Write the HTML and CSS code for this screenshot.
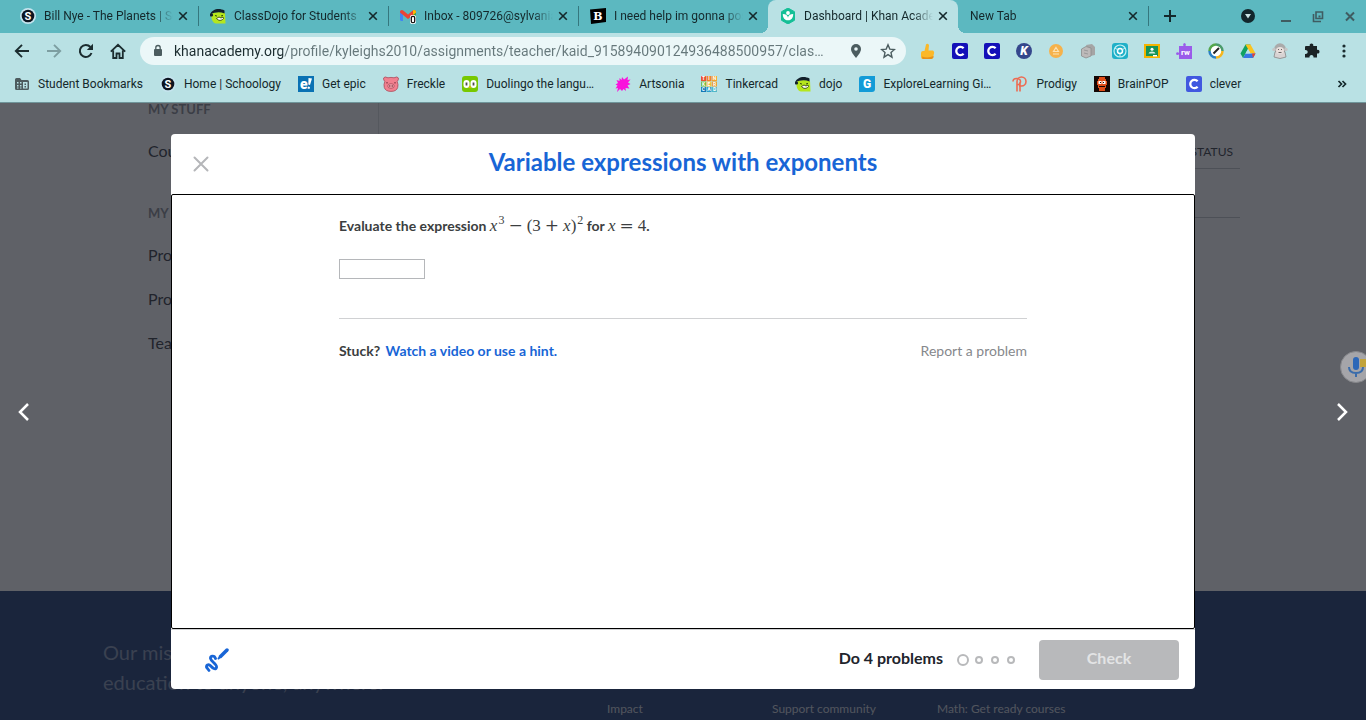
FILE: index.html
```
<!DOCTYPE html>
<html lang="en">
<head>
    <meta charset="UTF-8">
    <meta name="viewport" content="width=device-width, initial-scale=1.0">
    <title>Dashboard | Khan Academy</title>
    <link rel="stylesheet" href="styles.css">
</head>
<body>
    <!-- icons used more than once -->
    <svg class="defs" aria-hidden="true">
        <symbol id="schoology" viewBox="0 0 16 16">
            <circle cx="8" cy="8" r="8" fill="#c5e4ee"/>
            <circle cx="8" cy="8" r="6.3" fill="#0d1420"/>
            <text x="8" y="12" text-anchor="middle" font-size="11" font-weight="700" fill="#fff">S</text>
        </symbol>
        <symbol id="dojo" viewBox="0 0 16 16">
            <path d="M1.500 6C4 4 10 3 15 5l.5 10.500H6C3 15 1 12 1.500 6z" fill="#b5e61d"/>
            <path d="M0 6.500C2 1 9-.5 14.500 2.500v3C10 3.500 5 4 0 6.500z" fill="#12202a"/>
            <circle cx="1.500" cy="7" r="1.600" fill="#12202a"/>
            <path d="M6.500 10.500c2 2.500 5 2.500 7 0l-.5-1.500-2 1-2-1z" fill="#fff" stroke="#33480d" stroke-width=".9"/>
            <path d="M5 7.500l2 .6M11 8l2-.6" stroke="#33480d"/>
        </symbol>
        <symbol id="close" viewBox="0 0 16 16">
            <path d="M4.200 4.200l7.600 7.600m0-7.600l-7.600 7.600" fill="none" stroke="currentColor" stroke-width="1.600"/>
        </symbol>
        <symbol id="clever" viewBox="0 0 16 16">
            <rect width="16" height="16" rx="2" fill="currentColor"/>
            <path d="M11.600 10.800a4.200 4.200 0 1 1 0-5.600" fill="none" stroke="#fff" stroke-width="2.300"/>
        </symbol>
    </svg>

    <header class="browser">
        <div class="tab-strip">
            <div class="tab">
                <svg class="icon"><use href="#schoology"/></svg>
                <span class="tab-title">Bill Nye - The Planets | Schoology</span>
                <button class="tab-close" aria-label="Close tab"><svg class="icon"><use href="#close"/></svg></button>
            </div>
            <div class="tab">
                <svg class="icon"><use href="#dojo"/></svg>
                <span class="tab-title">ClassDojo for Students</span>
                <button class="tab-close" aria-label="Close tab"><svg class="icon"><use href="#close"/></svg></button>
            </div>
            <div class="tab">
                <svg class="icon" viewBox="0 0 16 16">
                    <path d="M0 3h3v10H1.500Q0 13 0 11.500z" fill="#4285f4"/>
                    <path d="M13 3h3v9h-3z" fill="#34a853"/>
                    <path d="M0 4.500C0 2 2 1.500 3.500 2.800L8 6.500l4.500-3.700C14 1.500 16 2 16 4.500L8 11z" fill="#ea4335"/>
                    <path d="M13 2.500c1.500-1 3 0 3 2L13 7z" fill="#fbbc04"/>
                    <rect x="10" y="7" width="6" height="9" rx="2" fill="#fff"/>
                    <rect x="11.300" y="8.300" width="3.400" height="6.400" rx="1.500" fill="none" stroke="#111" stroke-width="1.300"/>
                </svg>
                <span class="tab-title">Inbox - 809726@sylvaniaschools.org</span>
                <button class="tab-close" aria-label="Close tab"><svg class="icon"><use href="#close"/></svg></button>
            </div>
            <div class="tab">
                <svg class="icon" viewBox="0 0 16 16">
                    <path d="M0 1.500L16 0v14L1 16z" fill="#000"/>
                    <text class="slab" x="8" y="12" text-anchor="middle" font-size="11" font-weight="700" fill="#fff">B</text>
                </svg>
                <span class="tab-title">I need help im gonna post this</span>
                <button class="tab-close" aria-label="Close tab"><svg class="icon"><use href="#close"/></svg></button>
            </div>
            <div class="tab active">
                <svg class="icon" viewBox="0 0 16 16">
                    <path d="M8 0l6.500 3.700v8.600L8 16l-6.500-3.700V3.700z" fill="#14bf96" stroke="#14bf96" stroke-linejoin="round"/>
                    <circle cx="8" cy="5" r="1.900" fill="#fff"/>
                    <path d="M2.800 6c3 0 5 1.500 5.200 3.700C8.200 7.500 10.200 6 13.200 6c0 4-2 6.300-5.200 6.300S2.800 10 2.800 6z" fill="#fff"/>
                </svg>
                <span class="tab-title">Dashboard | Khan Academy</span>
                <button class="tab-close" aria-label="Close tab"><svg class="icon"><use href="#close"/></svg></button>
            </div>
            <div class="tab">
                <span class="tab-title">New Tab</span>
                <button class="tab-close" aria-label="Close tab"><svg class="icon"><use href="#close"/></svg></button>
            </div>
            <button class="new-tab" aria-label="New tab">
                <svg class="icon" viewBox="0 0 16 16"><path d="M8 2v12M2 8h12" stroke="#14282b" stroke-width="2"/></svg>
            </button>
            <div class="window-controls">
                <button class="search-tabs" aria-label="Search tabs">
                    <svg class="icon" viewBox="0 0 16 16"><circle cx="8" cy="8" r="7" fill="#12262c"/><path d="M5 6h6l-3 4.500z" fill="#c9e3e5"/></svg>
                </button>
                <button aria-label="Minimize">
                    <svg class="icon" viewBox="0 0 16 16"><path d="M3 13h10" stroke="#3f5c61" stroke-width="2"/></svg>
                </button>
                <button aria-label="Restore">
                    <svg class="icon" viewBox="0 0 16 16"><path d="M6 4h6.500v6.500H6zM3.500 6v7.500H11" fill="none" stroke="#3f5c61" stroke-width="1.600"/><path d="M8.500 7.500h2v2h-2z" fill="#3f5c61"/></svg>
                </button>
                <button aria-label="Close window">
                    <svg class="icon" viewBox="0 0 16 16"><path d="M4 4.500l8 8m0-8l-8 8" stroke="#3f5c61" stroke-width="2"/></svg>
                </button>
            </div>
        </div>

        <div class="toolbar">
            <button aria-label="Back">
                <svg class="icon" viewBox="0 0 16 16"><path d="M15 8H2M8 1.800L1.800 8 8 14.200" fill="none" stroke="#1b2c2f" stroke-width="1.900"/></svg>
            </button>
            <button aria-label="Forward" disabled>
                <svg class="icon" viewBox="0 0 16 16"><path d="M1 8h13M8 1.800L14.200 8 8 14.200" fill="none" stroke="#7d9ea1" stroke-width="1.900"/></svg>
            </button>
            <button aria-label="Reload">
                <svg class="icon" viewBox="0 0 16 16"><path d="M13.500 10A6 6 0 1 1 12.400 4" fill="none" stroke="#1b2c2f" stroke-width="2"/><path d="M15 .8V7H8.800z" fill="#1b2c2f"/></svg>
            </button>
            <button aria-label="Home">
                <svg class="icon" viewBox="0 0 16 16"><path d="M.8 8.700L8 1.800l7.200 6.900M3.200 7.500V15H6.500v-4.500h3V15h3.300V7.500" fill="none" stroke="#1b2c2f" stroke-width="1.800"/></svg>
            </button>
            <div class="omnibox">
                <svg class="icon" viewBox="0 0 16 16"><rect x="4" y="6" width="8" height="7" rx="1" fill="#4b5c5f"/><path d="M5.800 6.500V4.700a2.200 2.200 0 0 1 4.400 0v1.800" fill="none" stroke="#4b5c5f" stroke-width="1.300"/></svg>
                <input class="url" type="text" aria-label="Address" value="khanacademy.org/profile/kyleighs2010/assignments/teacher/kaid_915894090124936488500957/clas…">
                <button aria-label="Location">
                    <svg class="icon" viewBox="0 0 16 16"><path d="M8 1a5 5 0 0 0-5 5c0 3.500 5 9 5 9s5-5.500 5-9a5 5 0 0 0-5-5z" fill="#4b5c5f"/><circle cx="8" cy="6" r="1.800" fill="#e9f6f7"/></svg>
                </button>
                <button aria-label="Bookmark this page">
                    <svg class="icon" viewBox="0 0 16 16"><path d="M8 1.800l1.800 4.300 4.700.4-3.500 3.100 1 4.600-4-2.500-4 2.500 1-4.600L1.500 6.500l4.700-.4z" fill="none" stroke="#4b5c5f" stroke-width="1.400"/></svg>
                </button>
            </div>
            <div class="extensions">
                <button aria-label="Thumbs up">
                    <svg class="icon" viewBox="0 0 16 16"><path d="M4.500 8L6 1.500Q7.500-.3 9 2l-.5 5.500H13q1.500 1 1 3l-1 4Q12.500 16 11 16H3Q1 16 1 14v-4Q1 8 3 8z" fill="#fbb829"/><path d="M2 13.500Q8 15.500 13.500 13v1.500Q12 16 11 16H3q-1 0-1-2.500z" fill="#e6911b"/></svg>
                </button>
                <button class="navy" aria-label="Clever"><svg class="icon"><use href="#clever"/></svg></button>
                <button class="navy" aria-label="Clever portal"><svg class="icon"><use href="#clever"/></svg></button>
                <button aria-label="Kami">
                    <svg class="icon" viewBox="0 0 16 16"><circle cx="8" cy="8" r="8" fill="#35478c"/><text x="8" y="12" text-anchor="middle" font-size="12" font-weight="900" font-style="italic" fill="#fff">K</text></svg>
                </button>
                <button aria-label="Alerts">
                    <svg class="icon" viewBox="0 0 16 16"><circle cx="8" cy="8" r="7" fill="#f6b24b"/><path d="M8 4.500l2.500 4h-5zM5 11h6" fill="none" stroke="#fce3b5" stroke-width="1.200"/></svg>
                </button>
                <button aria-label="Documents">
                    <svg class="icon" viewBox="0 0 16 16"><path d="M6 2l6-1 3 3v8l-5 1z" fill="#a5a5a5"/><path d="M1.500 6L6 3.500 11 5v8l-5 2-4.500-2z" fill="#bdb9b9" stroke="#8c8c8c" stroke-width=".8"/><path d="M4 7l4 1M4 10l4 1" stroke="#999"/></svg>
                </button>
                <button aria-label="Screencastify">
                    <svg class="icon" viewBox="0 0 16 16"><rect width="16" height="16" rx="3" fill="#1fb0c8"/><circle cx="8" cy="8" r="6" fill="none" stroke="#c4f0f4" stroke-width="1.200"/><circle cx="8" cy="8" r="2.500" fill="none" stroke="#fff" stroke-width="1.500"/><path d="M3 5l3 2m7-2l-3 2M8 14v-3" stroke="#c4f0f4"/></svg>
                </button>
                <button aria-label="Google Classroom">
                    <svg class="icon" viewBox="0 0 16 16"><path d="M0 1h16v14H0z" fill="#f4b400"/><path d="M2 3h12v10H2z" fill="#159457"/><circle cx="8" cy="6.300" r="1.500" fill="#fff"/><path d="M4.500 10.500Q5 8.500 8 8.500t3.500 2z" fill="#d5eedf"/><path d="M9 12h4v1.500H9z" fill="#fff"/></svg>
                </button>
                <button aria-label="Read and Write">
                    <svg class="icon" viewBox="0 0 16 16"><path d="M3 3h4.500q-1-2.500 1-3 2 .5 1 3H16v13H3v-4.500q-2.500 1.200-3-.8.5-2 3-1z" fill="#9a5bea"/><text x="9.500" y="12" text-anchor="middle" font-size="8" font-weight="700" fill="#fff">rw</text></svg>
                </button>
                <button aria-label="Writing helper">
                    <svg class="icon" viewBox="0 0 16 16"><circle cx="8" cy="8" r="6" fill="#fff"/><path d="M8 1.500A6.500 6.500 0 0 1 14.500 8" fill="none" stroke="#4b9b6c" stroke-width="2.500"/><path d="M14.500 8A6.500 6.500 0 0 1 8 14.500" fill="none" stroke="#f6b61c" stroke-width="2.500"/><path d="M8 14.500A6.500 6.500 0 0 1 1.500 8" fill="none" stroke="#2a80c5" stroke-width="2.500"/><path d="M1.500 8A6.500 6.500 0 0 1 8 1.500" fill="none" stroke="#54a64c" stroke-width="2.500"/><path d="M5.500 10.500L11 5" stroke="#222" stroke-width="2"/></svg>
                </button>
                <button aria-label="Google Drive">
                    <svg class="icon" viewBox="0 0 16 16"><path d="M5.500 1.500h5L3 15 .5 10.500z" fill="#11a261"/><path d="M5.500 1.500h5l5 9h-5z" fill="#fcc31e"/><path d="M5.500 10.500h10L13 15H3z" fill="#3777e3"/><path d="M8 6l2.500 4.500h-5z" fill="#b8e1e6"/><path d="M12 10.500h3.500L13 15z" fill="#e94235"/></svg>
                </button>
                <button aria-label="Monkey">
                    <svg class="icon" viewBox="0 0 16 16"><circle cx="8" cy="6" r="5.800" fill="#aaa"/><circle cx="2" cy="6.500" r="1.700" fill="#c5c5c5"/><circle cx="14" cy="6.500" r="1.700" fill="#c5c5c5"/><path d="M3 9q5-4 10 0l1 5q-6 3-12 0z" fill="#d8d3d3" stroke="#888" stroke-width=".8"/><ellipse cx="8" cy="7.500" rx="4" ry="3.500" fill="#e8dfdc"/><path d="M6 6.500h1m2 0h1M6.500 9.500h3" stroke="#666"/></svg>
                </button>
                <button aria-label="Extensions">
                    <svg class="icon" viewBox="0 0 16 16"><path d="M2 3h3.800C5.200 1.500 6.200.5 7.500.5S9.800 1.500 9.200 3H13v4c1.500-.6 2.500.4 2.500 1.700S14.500 11 13 10.400v4.100H9.500c.2-1.700-.7-2.600-2-2.600s-2.200.9-2 2.600H1V11c1.700.2 2.700-.8 2.700-2S2.700 6.800 1 7V4q0-1 1-1z" fill="#1b2326"/></svg>
                </button>
                <button aria-label="Menu">
                    <svg class="icon" viewBox="0 0 16 16"><g fill="#1b2c2f"><circle cx="8" cy="3" r="1.600"/><circle cx="8" cy="8" r="1.600"/><circle cx="8" cy="13" r="1.600"/></g></svg>
                </button>
            </div>
        </div>

        <nav class="bookmarks" aria-label="Bookmarks">
            <a href="#">
                <svg class="icon" viewBox="0 0 16 16"><path d="M1 3.500Q1 2 2.500 2H6l1.500 2h6Q15 4 15 5.500v7q0 1.500-1.500 1.500h-11Q1 14 1 12.500z" fill="#4d5b5e"/><path d="M3 6h1.500v1.500H3zm3 0h1.500v1.500H6zM3 9h1.500v1.500H3zm3 0h1.500v1.500H6zm-3 2.500h1.500v1H3zm3 0h1.500v1H6zM9 6h4.500v6.500H9z" fill="#b9e1e4"/><path d="M10.500 7.500H12V9h-1.500zm0 2.500H12v1.500h-1.500z" fill="#4d5b5e"/></svg>
                Student Bookmarks
            </a>
            <a href="#"><svg class="icon"><use href="#schoology"/></svg>Home | Schoology</a>
            <a href="#">
                <svg class="icon" viewBox="0 0 16 16"><path d="M0 0h16v16H0z" fill="#0a71b3"/><text x="2" y="13" font-size="14" font-weight="900" fill="#fff">e</text><path d="M10.500 2l3.500.6L12 9l-1.700-.5zM10 10.500l2 .4-.5 2.100-2-.5z" fill="#fff"/></svg>
                Get epic
            </a>
            <a href="#">
                <svg class="icon" viewBox="0 0 16 16"><path d="M.6 2Q1.500 0 5 1.800q3-.8 6 0Q14.500 0 15.400 2q.3 2-1.200 3.500 1.300 3 .5 6Q13.500 15.400 8 15.400t-6.700-3.900q-.8-3 .5-6Q.3 4 .6 2z" fill="#f1808f" stroke="#a94a5a" stroke-width=".8"/><ellipse cx="8" cy="10" rx="3.300" ry="2.300" fill="#f7a4ae" stroke="#a94a5a" stroke-width=".8"/><path d="M6.800 9.200v1.600m2.400-1.600v1.600M4 6v1.500m8-1.500v1.500" stroke="#6d2836"/></svg>
                Freckle
            </a>
            <a class="long" href="#">
                <svg class="icon" viewBox="0 0 16 16"><rect width="16" height="16" rx="3" fill="#78c800"/><rect x="1.500" y="4" width="6" height="8" rx="3" fill="#fff"/><rect x="8.500" y="4" width="6" height="8" rx="3" fill="#fff"/><path d="M4.500 6.500v3m7-3v3" stroke="#4b4b4b" stroke-width="1.800"/><path d="M6.500 10.500h3L8 12.500z" fill="#ffb100"/></svg>
                Duolingo the langu…
            </a>
            <a href="#">
                <svg class="icon" viewBox="0 0 16 16"><path d="M6.500 4L7 1l2 2.500L13 .5l-.5 3.500 3-.5-2.500 3 2.500 1.500-3 1.500 2 3-4-.5.5 3-2.500-2-1.500 2-2-2L2 16l1-4-2.500.5L2.500 9.500.5 8.500 3 7 1.500 4l3 1L4.500 2z" fill="#fa10dc"/></svg>
                Artsonia
            </a>
            <a href="#">
                <svg class="icon" viewBox="0 0 16 16">
                    <path d="M0 0h5v5H0z" fill="#e95033"/><path d="M5.500 0h5v5h-5z" fill="#f2812c"/><path d="M11 0h5v5h-5z" fill="#f3a52d"/>
                    <path d="M0 5.500h5v5H0z" fill="#75b943"/><path d="M5.500 5.500h5v5h-5z" fill="#f3bb32"/><path d="M11 5.500h5v5h-5z" fill="#e99b30"/>
                    <path d="M0 11h5v5H0z" fill="#1377b6"/><path d="M5.500 11h5v5h-5z" fill="#2d9fcc"/><path d="M11 11h5v5h-5z" fill="#51b7c8"/>
                    <g fill="#fff" font-size="5" font-weight="700" text-anchor="middle"><text x="2.500" y="4.300">T</text><text x="8" y="4.300">I</text><text x="13.500" y="4.300">N</text><text x="2.500" y="9.800">K</text><text x="8" y="9.800">E</text><text x="13.500" y="9.800">R</text><text x="2.500" y="15.300">C</text><text x="8" y="15.300">A</text><text x="13.500" y="15.300">D</text></g>
                </svg>
                Tinkercad
            </a>
            <a href="#"><svg class="icon"><use href="#dojo"/></svg>dojo</a>
            <a class="long" href="#">
                <svg class="icon" viewBox="0 0 16 16"><path d="M3 0h13v13q0 3-3 3H0V3q0-3 3-3z" fill="#139bd7"/><text x="8" y="12" text-anchor="middle" font-size="12" font-weight="900" fill="#fff">G</text></svg>
                ExploreLearning Gi…
            </a>
            <a href="#">
                <svg class="icon" viewBox="0 0 16 16"><path d="M5 15.500V5.500A4.500 4.500 0 1 1 9.500 10H7M1 5.500q0-3 3.500-3 4 0 4 3T5 9M8 15.500V6" fill="none" stroke="#ed6b52" stroke-width="1.600"/></svg>
                Prodigy
            </a>
            <a href="#">
                <svg class="icon" viewBox="0 0 16 16"><path d="M0 0h16v16H0z" fill="#140704"/><path d="M5 1h6v2h1v2h1v4h-1v3h-1v3H5v-3H4V9H3V5h1V3h1z" fill="#df4d18"/><path d="M4.500 5h3v3h-3zm4 0h3v3h-3z" fill="#fff"/><path d="M6 6h1v1H6zm3 0h1v1H9zM5 10h6v1H5z" fill="#140704"/></svg>
                BrainPOP
            </a>
            <a class="violet" href="#"><svg class="icon"><use href="#clever"/></svg><span>clever</span></a>
            <button class="more" aria-label="More bookmarks">
                <svg class="icon" viewBox="0 0 16 16"><path d="M4.500 5l3 3-3 3m4-6l3 3-3 3" fill="none" stroke="#14282b" stroke-width="1.700"/></svg>
            </button>
        </nav>
    </header>

    <div class="page">
        <div class="dashboard">
            <nav class="sidebar" aria-label="Profile">
                <h2>MY STUFF</h2>
                <a href="#">Courses</a>
                <h2>MY ACCOUNT</h2>
                <a href="#">Progress</a>
                <a href="#">Profile</a>
                <a href="#">Teachers</a>
            </nav>
            <table class="assignments">
                <thead>
                    <tr><th>STATUS</th></tr>
                </thead>
                <tbody>
                    <tr><td></td></tr>
                </tbody>
            </table>
        </div>
        <footer class="site-footer">
            <p class="mission">Our mission is to provide a free, world-class education to anyone, anywhere.</p>
            <nav class="footer-links" aria-label="Footer">
                <a href="#">Impact</a>
                <a href="#">Support community</a>
                <a href="#">Math: Get ready courses</a>
            </nav>
        </footer>

        <div class="overlay">
            <button class="arrow" aria-label="Previous">
                <svg viewBox="0 0 16 24"><path d="M12 4L4 12l8 8" fill="none" stroke="#fff" stroke-width="2.500"/></svg>
            </button>
            <section class="modal" role="dialog" aria-labelledby="modal-title">
                <div class="modal-header">
                    <button class="modal-close" aria-label="Close">
                        <svg viewBox="0 0 16 16"><path d="M1.500 1.500l13 13m0-13l-13 13" fill="none" stroke="#b5b6b9" stroke-width="2" stroke-linecap="round"/></svg>
                    </button>
                    <h1 id="modal-title">Variable expressions with exponents</h1>
                </div>
                <div class="exercise">
                    <div class="exercise-inner">
                        <label class="question" for="answer">Evaluate the expression <span class="math"><i>x</i><sup>3</sup><span class="op">−</span>(3<span class="op">+</span><i>x</i>)<sup>2</sup></span> for <span class="math"><i>x</i><span class="op">=</span>4</span>.</label>
                        <input class="answer" id="answer" type="text">
                        <div class="help">
                            <p>Stuck? <a href="#">Watch a video or use a hint.</a></p>
                            <a class="report" href="#">Report a problem</a>
                        </div>
                    </div>
                </div>
                <div class="modal-footer">
                    <button class="scratchpad" aria-label="Scratchpad">
                        <svg viewBox="0 0 24 24" fill="none" stroke="#1865d6" stroke-linecap="round" stroke-linejoin="round"><path d="M22 2L15.500 8.500" stroke-width="3.500"/><path d="M13.500 10.500l1.500-1.500" stroke-width="2"/><path d="M10.500 10.500C9.500 7 5 7.500 5.500 10.500 6 13.500 12.500 16.500 11.500 19.500 10.500 22.500 7.500 20 5.500 17.800 3.500 15.500 .5 17.500 1.800 19.700L4 22.500" stroke-width="2.800"/></svg>
                    </button>
                    <span class="progress-text">Do 4 problems</span>
                    <div class="dots">
                        <span class="dot current"></span>
                        <span class="dot"></span>
                        <span class="dot"></span>
                        <span class="dot"></span>
                    </div>
                    <button class="check" disabled>Check</button>
                </div>
            </section>
            <button class="arrow" aria-label="Next">
                <svg viewBox="0 0 16 24"><path d="M4 4l8 8-8 8" fill="none" stroke="#fff" stroke-width="2.500"/></svg>
            </button>
        </div>

        <button class="mic" aria-label="Voice typing">
            <svg viewBox="0 0 32 32"><circle cx="16" cy="16" r="15.500" fill="#a5a5a9" stroke="#85868a"/><path d="M20 8h12v8H20z" fill="#c2a33b"/><rect x="13" y="6" width="6" height="13" rx="3" fill="#2c67b8"/><path d="M9 16q0 6 7 6t7-6M16 22v4" fill="none" stroke="#3a6cab" stroke-width="2"/></svg>
        </button>
    </div>
</body>
</html>
```

FILE: styles.css
```
* {
    box-sizing: border-box;
}
body {
    margin: 0;
    height: 100vh;
    display: flex;
    flex-direction: column;
    overflow: hidden;
    font-family: Lato, sans-serif;
    color: #21242c;
}
button {
    display: flex;
    align-items: center;
    justify-content: center;
    padding: 0;
    border: none;
    background: none;
    font-family: inherit;
    cursor: pointer;
}
a {
    color: inherit;
    text-decoration: none;
}
h1, h2, p {
    margin: 0;
}
.defs {
    display: none;
}
.icon {
    width: 16px;
    height: 16px;
    flex: none;
}
.slab {
    font-family: "DejaVu Serif", serif;
}

/* browser window */
.browser {
    font-family: Roboto, sans-serif;
    font-size: 12px;
    color: #14282b;
    background: #b9e1e4;
    border-bottom: 1px solid #70959a;
}
.tab-strip {
    display: flex;
    height: 33px;
    padding: 0 0 1px 8px;
    background: #5cb8c0;
}
.tab {
    position: relative;
    display: flex;
    align-items: center;
    gap: 8px;
    flex: 0 1 190px;
    min-width: 0;
    padding: 0 7px 0 12px;
}
.tab::after {
    content: "";
    position: absolute;
    right: -1px;
    top: 6px;
    width: 1px;
    height: 20px;
    background: #35777e;
}
.tab:has(+ .active)::after {
    display: none;
}
.tab.active {
    margin-bottom: -1px;
    padding-bottom: 1px;
    background: #b9e1e4;
    border-radius: 8px 8px 0 0;
}
/* the curved feet of the active tab */
.tab.active::before, .tab.active::after {
    content: "";
    position: absolute;
    top: auto;
    bottom: 0;
    width: 8px;
    height: 8px;
    background: radial-gradient(circle at 0 0, transparent 8px, #b9e1e4 8px);
}
.tab.active::before {
    left: -8px;
}
.tab.active::after {
    right: -8px;
    background: radial-gradient(circle at 100% 0, transparent 8px, #b9e1e4 8px);
}
.tab-title {
    flex: 1;
    overflow: hidden;
    white-space: nowrap;
    mask-image: linear-gradient(to right, #000 calc(100% - 20px), transparent);
}
.tab-close {
    margin-left: -6px;
    color: #14282b;
}
.new-tab {
    width: 44px;
}
.window-controls {
    display: flex;
    margin-left: auto;
}
.window-controls button {
    width: 32px;
}
.window-controls .search-tabs {
    margin-right: 6px;
}
.toolbar {
    display: flex;
    align-items: center;
    height: 36px;
    padding: 0 6px;
}
.toolbar button {
    width: 32px;
    height: 28px;
    flex: none;
}
.omnibox {
    display: flex;
    align-items: center;
    flex: 1;
    min-width: 0;
    height: 28px;
    margin: 0 6px;
    padding: 0 2px 0 10px;
    border-radius: 14px;
    background: #ebf7f8;
}
.url {
    flex: 1;
    min-width: 0;
    margin-left: 8px;
    padding: 0;
    border: none;
    font-family: inherit;
    font-size: 14px;
    line-height: 20px;
    color: transparent;
    background: linear-gradient(to right, #1b2c2f 109px, #66787b 109px);
    background-clip: text;
}
.extensions {
    display: flex;
}
.navy {
    color: #1410b8;
}
.bookmarks {
    display: flex;
    align-items: center;
    gap: 17px;
    height: 33px;
    padding: 0 16px 3px 14px;
    white-space: nowrap;
}
.bookmarks a {
    display: flex;
    align-items: center;
    gap: 8px;
}
.bookmarks .long {
    width: 136px;
}
.violet .icon {
    color: #4158e0;
}
.more {
    margin-left: auto;
}

/* profile page behind the modal */
.page {
    position: relative;
    flex: 1;
    min-height: 0;
    display: flex;
    flex-direction: column;
    overflow: hidden;
    background: #fff;
}
.dashboard {
    flex: 1;
    display: flex;
    margin-top: -1px;
    padding: 0 126px 0 148px;
}
.sidebar {
    width: 231px;
    border-right: 1px solid #dcdddf;
}
.sidebar h2 {
    margin-bottom: 13px;
    font-size: 13px;
    line-height: 14px;
    color: #7f8188;
}
.sidebar a + h2 {
    margin-top: 33px;
}
.sidebar a {
    display: block;
    font-size: 16px;
    line-height: 44px;
}
.assignments {
    flex: 1;
    align-self: flex-start;
    margin: 33px 0 0 32px;
    border-collapse: collapse;
}
.assignments th, .assignments td {
    padding: 0 7px;
    border-bottom: 1px solid #bfc0c4;
}
.assignments th {
    height: 33px;
    font-size: 12px;
    font-weight: 400;
    text-align: right;
}
.assignments td {
    height: 49px;
}
.site-footer {
    display: flex;
    height: 129px;
    padding: 46px 103px 0;
    background: #0a2a66;
}
.mission {
    width: 504px;
    padding-right: 80px;
    font-size: 20px;
    line-height: 30px;
    color: #7c8cae;
}
.footer-links {
    display: grid;
    grid-template-columns: repeat(3, 165px);
    padding-top: 65px;
    font-size: 12px;
    line-height: 14px;
    color: #cdd2dc;
}

/* exercise modal */
.overlay {
    position: absolute;
    inset: 0;
    display: flex;
    align-items: center;
    justify-content: space-between;
    padding: 31px 0;
    background: rgba(33, 36, 44, 0.72);
}
.arrow {
    width: 48px;
    height: 48px;
}
.arrow svg {
    width: 16px;
    height: 24px;
}
.modal {
    display: flex;
    flex-direction: column;
    width: 1024px;
    max-width: calc(100% - 96px);
    height: 100%;
    border-radius: 4px;
    background: #fff;
}
.modal-header {
    display: grid;
    grid-template-columns: 60px 1fr 60px;
    align-items: center;
    height: 60px;
}
.modal-header h1 {
    padding-bottom: 4px;
    font-size: 24px;
    line-height: 28px;
    text-align: center;
    color: #1865d6;
}
.modal-close {
    height: 44px;
}
.modal-close svg {
    width: 16px;
    height: 16px;
}
.exercise {
    flex: 1;
    border: 1px solid #000;
    border-radius: 2px;
}
.exercise-inner {
    max-width: 688px;
    margin: 0 auto;
    padding-top: 19px;
    font-size: 14px;
    font-weight: 700;
    color: #3b3e40;
}
.question {
    display: block;
    line-height: 24px;
}
.math {
    font-family: "Liberation Serif", serif;
    font-size: 17px;
    font-weight: 400;
    line-height: 20px;
}
.math sup {
    margin-left: 1px;
    font-size: 12px;
    line-height: 0;
}
.op {
    margin: 0 4px;
    font-family: "DejaVu Serif", serif;
}
.answer {
    display: block;
    width: 86px;
    height: 20px;
    margin-top: 21px;
    border: 1px solid #b5b7ba;
    font-family: inherit;
    font-size: 14px;
}
.help {
    display: flex;
    justify-content: space-between;
    margin-top: 39px;
    padding-top: 22px;
    border-top: 1px solid #d0d1d3;
    line-height: 20px;
}
.help p a {
    margin-left: 2px;
    color: #1865d6;
}
.help .report {
    font-weight: 400;
    color: #86888c;
}
.modal-footer {
    display: flex;
    align-items: center;
    height: 60px;
    padding: 0 16px;
    border-top: 1px solid #d0d1d3;
    border-radius: 0 0 4px 4px;
}
.scratchpad {
    width: 60px;
    height: 40px;
    margin-right: auto;
}
.scratchpad svg {
    width: 24px;
    height: 24px;
}
.progress-text {
    padding-bottom: 4px;
    font-size: 16px;
    font-weight: 700;
    line-height: 20px;
}
.dots {
    display: flex;
    align-items: center;
    gap: 8px;
    margin: 0 24px 0 14px;
}
.dot {
    width: 8px;
    height: 8px;
    border: 2px solid #b8b9bb;
    border-radius: 50%;
}
.dot.current {
    width: 12px;
    height: 12px;
    margin-right: -2px;
}
.check {
    width: 140px;
    height: 40px;
    padding-bottom: 4px;
    border-radius: 4px;
    background: #b8b9bb;
    font-size: 16px;
    font-weight: 700;
    color: #e3e4e5;
}
.mic {
    position: absolute;
    top: 248px;
    right: -6px;
}
.mic svg {
    width: 32px;
    height: 32px;
}
```
